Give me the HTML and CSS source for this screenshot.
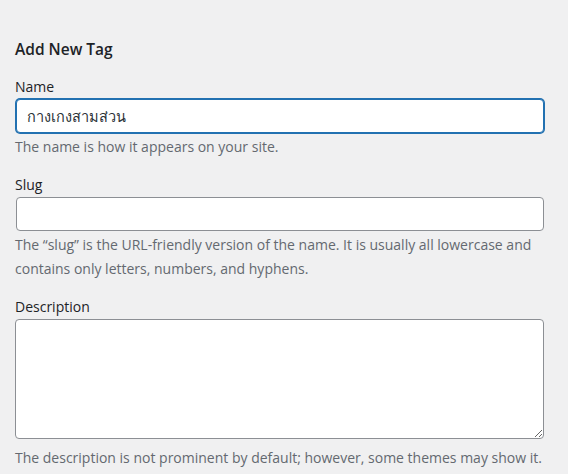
FILE: index.html
```html
<!DOCTYPE html>
<html lang="en">
<head>
<meta charset="utf-8">
<title>Add New Tag</title>
<link rel="stylesheet" href="styles.css">
</head>
<body>
<div class="form-wrap">
  <h2 class="title">Add New Tag</h2>
  <form class="tag-form">
    <div class="form-field">
      <label class="field-label" for="tag-name">Name</label>
      <input class="text-input is-focused" id="tag-name" type="text" value="กางเกงสามส่วน">
      <p class="help">The name is how it appears on your site.</p>
    </div>
    <div class="form-field">
      <label class="field-label" for="tag-slug">Slug</label>
      <input class="text-input" id="tag-slug" type="text" value="">
      <p class="help">The “slug” is the URL-friendly version of the name. It is usually all lowercase and contains only letters, numbers, and hyphens.</p>
    </div>
    <div class="form-field">
      <label class="field-label" for="tag-description">Description</label>
      <textarea class="text-area" id="tag-description"></textarea>
      <p class="help help-after-area">The description is not prominent by default; however, some themes may show it.</p>
    </div>
  </form>
</div>
</body>
</html>
```

FILE: styles.css
```css
html, body {
  margin: 0;
  padding: 0;
  background: #f0f0f1;
}
body {
  font-family: "Segoe UI", "Open Sans", "Noto Sans", sans-serif;
  font-size: 14px;
  color: #3c434a;
}
.form-wrap {
  padding: 39px 22px 0 15px;
}
.title {
  margin: 0;
  font-size: 15.5px;
  line-height: 20px;
  font-weight: 600;
  color: #1d2327;
}
.tag-form {
  margin-top: 18px;
}
.form-field {
  display: flex;
  flex-direction: column;
  margin-bottom: 16px;
}
.field-label {
  font-size: 14px;
  line-height: 20px;
  color: #1d2327;
  margin-bottom: 2px;
}
.text-input {
  box-sizing: border-box;
  width: 528px;
  height: 34px;
  margin: 0 0 0 1px;
  padding: 0 10px;
  border: 1px solid #8c8f94;
  border-radius: 4px;
  background: #fff;
  font: inherit;
  font-size: 14.5px;
  color: #2c3338;
  outline: none;
}
.text-input.is-focused {
  border-color: #2271b1;
  box-shadow: 0 0 0 1px #2271b1;
}
.text-area {
  box-sizing: border-box;
  width: 529px;
  height: 120px;
  margin: 0;
  padding: 2px 6px;
  border: 1px solid #8c8f94;
  border-radius: 4px;
  background: #fff;
  font: inherit;
  outline: none;
}
.help {
  margin: 2px 0 0;
  font-size: 14px;
  line-height: 24px;
  color: #646970;
}
.help-after-area {
  margin-top: 7px;
}
```
